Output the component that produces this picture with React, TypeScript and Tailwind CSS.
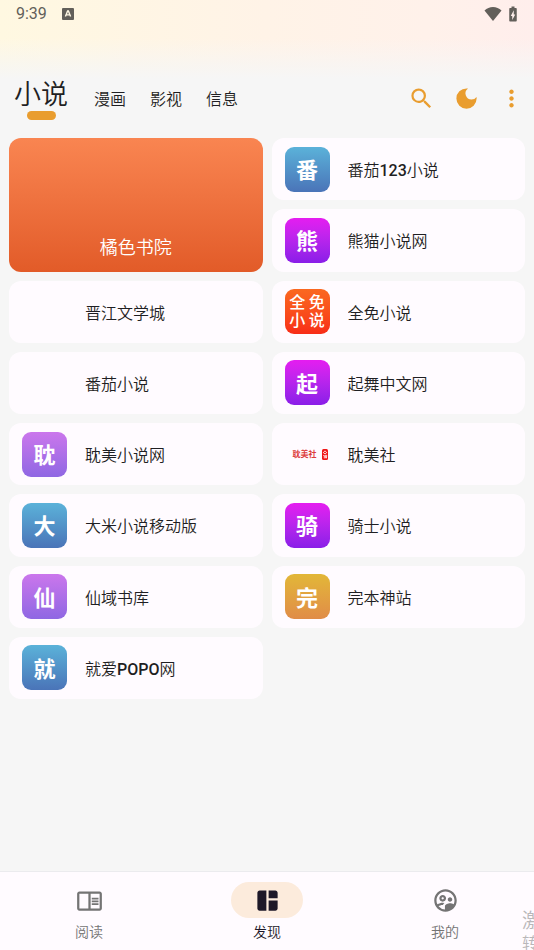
import React from 'react';
import {
  MdBatteryChargingFull,
  MdDarkMode,
  MdMoreVert,
  MdOutlineChromeReaderMode,
  MdOutlineSupervisedUserCircle,
  MdSearch,
  MdSpaceDashboard
} from 'react-icons/md';

const tones = {
  blue: 'bg-linear-to-b from-[#5bb2d9] to-[#4a74b8]',
  magenta: 'bg-linear-to-b from-[#e51cf0] to-[#8a1de8]',
  violet: 'bg-linear-to-b from-[#cb76ec] to-[#8f67e3]',
  gold: 'bg-linear-to-b from-[#e2b737] to-[#e08c47]'
};

type Source = {
  title: string;
  letter?: string;
  tone?: keyof typeof tones;
  logo?: 'quanmian' | 'danmei';
};

// Listed row by row; the featured card takes the first two rows of the left column
const sources: Source[] = [
  { title: '番茄123小说', letter: '番', tone: 'blue' },
  { title: '熊猫小说网', letter: '熊', tone: 'magenta' },
  { title: '晋江文学城' },
  { title: '全免小说', logo: 'quanmian' },
  { title: '番茄小说' },
  { title: '起舞中文网', letter: '起', tone: 'magenta' },
  { title: '耽美小说网', letter: '耽', tone: 'violet' },
  { title: '耽美社', logo: 'danmei' },
  { title: '大米小说移动版', letter: '大', tone: 'blue' },
  { title: '骑士小说', letter: '骑', tone: 'magenta' },
  { title: '仙域书库', letter: '仙', tone: 'violet' },
  { title: '完本神站', letter: '完', tone: 'gold' },
  { title: '就爱POPO网', letter: '就', tone: 'blue' }
];

const tabs = ['漫画', '影视', '信息'];

const actions = [
  { label: '搜索', icon: MdSearch },
  { label: '夜间模式', icon: MdDarkMode },
  { label: '更多', icon: MdMoreVert }
];

const navItems = [
  { label: '阅读', icon: MdOutlineChromeReaderMode },
  { label: '发现', icon: MdSpaceDashboard, active: true },
  { label: '我的', icon: MdOutlineSupervisedUserCircle }
];

const StatusBar = () => (
  <div className="flex h-[27px] items-center justify-between pl-4 pr-3 text-[#625f5a]">
    <div className="flex items-center gap-[15px]">
      <span className="text-base font-normal">9:39</span>
      <svg viewBox="0 0 12 12" className="size-3">
        <rect width="12" height="12" rx="1" fill="currentColor" />
        <path d="M3.4 8.6 5.6 3h.8l2.2 5.6M4.3 6.9h3.4" fill="none" stroke="#fff8e5" strokeWidth="1.4" />
      </svg>
    </div>
    <div className="flex items-center gap-[2px]">
      <svg viewBox="0 0 18 14" className="h-[14px] w-[18px]">
        <path d="M9 14 .5 3.4C2.8 1.3 5.8 0 9 0s6.2 1.3 8.5 3.4z" fill="currentColor" />
      </svg>
      <MdBatteryChargingFull className="size-[18px]" />
    </div>
  </div>
);

const SourceIcon = ({ letter, tone, logo }: Source) => {
  if (logo === 'quanmian') {
    return (
      <span className="grid size-[45px] shrink-0 grid-cols-2 place-content-center place-items-center gap-x-[2px] rounded-[9px] bg-linear-to-b from-[#fa6820] to-[#f82c18] px-1 text-base leading-[18px] font-medium text-white">
        <span>全</span>
        <span>免</span>
        <span>小</span>
        <span>说</span>
      </span>
    );
  }
  if (logo === 'danmei') {
    return (
      <span className="flex size-[45px] shrink-0 items-center justify-end gap-[5px] pr-[2px] text-[8px] leading-none font-bold text-[#dc3c3c]">
        <span className="pt-[2px]">耽美社</span>
        <svg viewBox="0 0 6 11" className="h-[11px] w-[6px]">
          <rect width="6" height="11" rx="1.5" fill="#f01414" />
          <path d="M1 4 3 1.8 5 4M1.8 4.5h2.4M1.3 6.5h1v2.8M3.2 6.3h1.5v1.4H3.2zM3.3 9.300l.6-1.5M4.5 7.8v1.5" fill="none" stroke="#fff" strokeWidth=".8" />
        </svg>
      </span>
    );
  }
  if (!letter || !tone) {
    return <span className="size-[45px] shrink-0" />;
  }
  return (
    <span className={`flex size-[45px] shrink-0 items-center justify-center rounded-[9px] pt-1 text-[22px] leading-none font-bold text-white ${tones[tone]}`}>
      {letter}
    </span>
  );
};

// Latin letters and digits are set a step heavier than the Chinese around them
const SourceTitle = ({ title }: { title: string }) => (
  <span className="truncate pt-1">
    {title.split(/([A-Z0-9]+)/).map((part, index) =>
      index % 2 ? <span key={index} className="font-medium">{part}</span> : part
    )}
  </span>
);

const SourceCard = (source: Source) => (
  <button className="flex aspect-[57/14] items-center gap-[18px] rounded-xl bg-[#fffbff] px-[13px] text-left">
    <SourceIcon {...source} />
    <SourceTitle title={source.title} />
  </button>
);

export default function App() {
  return (
    <div className="relative flex min-h-screen flex-col overflow-hidden bg-[#f6f6f6] font-[Roboto,'Noto_Sans_CJK_SC',sans-serif] text-base font-[350] text-[#1f1f23]">
      <header className="bg-[linear-gradient(to_bottom,transparent_28%,#f6f6f6_58%),linear-gradient(to_right,#fff8e1,#fff3e7_50%,#fff1ea_80%,#ffeeec)]">
        <StatusBar />
        <div className="flex items-center justify-between pt-[49px] pb-4">
          <nav className="flex items-end pl-[14px]">
            <button className="flex flex-col items-center pt-[3px] text-[27px] leading-8">
              小说
              <span className="h-[9px] w-[29px] rounded-full bg-[#e99d2f]" />
            </button>
            <div className="flex gap-6 pb-2 pl-[26px]">
              {tabs.map((tab) => (
                <button key={tab} className="leading-6">{tab}</button>
              ))}
            </div>
          </nav>
          <div className="flex text-[#e99d2f]">
            {actions.map(({ label, icon: Icon }) => (
              <button key={label} aria-label={label} className="flex w-[45px] justify-center">
                <Icon className="size-[27px]" />
              </button>
            ))}
          </div>
        </div>
      </header>

      <main className="grid flex-1 grid-cols-2 content-start gap-[9px] px-[9px] pt-[2px]">
        <button className="row-span-2 flex items-end justify-center rounded-xl bg-linear-to-b from-[#f98551] to-[#e25b28] pb-[10px] text-lg text-white">
          橘色书院
        </button>
        {sources.map((source) => (
          <SourceCard key={source.title} {...source} />
        ))}
      </main>

      <nav className="grid grid-cols-3 border-t border-[#ebebee] bg-[#fffbff] pt-[10px] pb-2 text-sm">
        {navItems.map(({ label, icon: Icon, active }) => (
          <button
            key={label}
            aria-current={active ? 'page' : undefined}
            className={`flex flex-col items-center gap-1 ${active ? 'text-[#1d1828]' : 'text-[#747474]'}`}
          >
            <span className={`flex h-9 w-[72px] items-center justify-center rounded-full ${active ? 'bg-[#fcebdc]' : ''}`}>
              <Icon className="size-[27px]" />
            </span>
            <span>{label}</span>
          </button>
        ))}
      </nav>

      {/* Desktop notice running off the right edge */}
      <div className="pointer-events-none absolute right-0 bottom-0 h-10 w-3 overflow-hidden whitespace-nowrap text-[#b9b7b9]">
        <p className="text-xl leading-[22px]">激</p>
        <p className="text-base leading-6">转</p>
      </div>
    </div>
  );
}
